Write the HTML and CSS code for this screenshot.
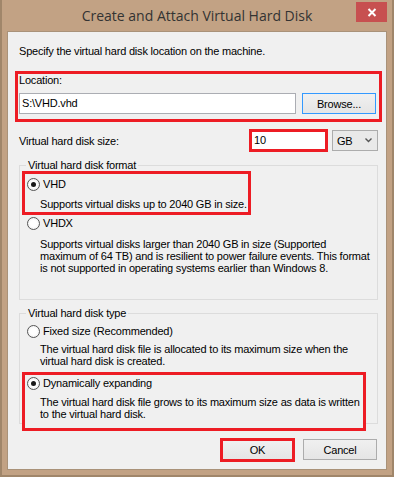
FILE: index.html
```html
<!DOCTYPE html>
<html lang="en">
  <head>
    <meta charset="UTF-8" />
    <title>Create and Attach Virtual Hard Disk</title>
    <link rel="stylesheet" href="styles.css">
  </head>
  <body>
    <div class="window">
      <div class="titlebar">
        <div class="title">Create and Attach Virtual Hard Disk</div>
        <button class="close" title="Close">
          <svg width="10" height="9" viewBox="0 0 10 9">
            <path d="M1.5 1 L8.5 8 M8.5 1 L1.5 8" stroke="#fff" stroke-width="2" fill="none" />
          </svg>
        </button>
      </div>

      <div class="client">
        <p class="intro">Specify the virtual hard disk location on the machine.</p>

        <div class="hl hl-location">
          <div class="field-label">Location:</div>
          <div class="location-row">
            <div class="textbox">S:\VHD.vhd</div>
            <button class="btn btn-default">Browse...</button>
          </div>
        </div>

        <div class="size-row">
          <span class="size-label">Virtual hard disk size:</span>
          <div class="size-input">10</div>
          <div class="combo">
            <span>GB</span>
            <svg width="7" height="5" viewBox="0 0 7 5">
              <path d="M0.5 0.5 L3.5 3.5 L6.5 0.5" stroke="#555" stroke-width="1.4" fill="none" />
            </svg>
          </div>
        </div>

        <fieldset class="group">
          <legend>Virtual hard disk format</legend>
          <div class="hl hl-vhd">
            <div class="option"><span class="radio checked"></span>VHD</div>
            <p class="desc">Supports virtual disks up to 2040 GB in size.</p>
          </div>
          <div class="option"><span class="radio"></span>VHDX</div>
          <p class="desc desc-vhdx">
            Supports virtual disks larger than 2040 GB in size (Supported<br>
            maximum of 64 TB) and is resilient to power failure events. This format<br>
            is not supported in operating systems earlier than Windows 8.
          </p>
        </fieldset>

        <fieldset class="group group-type">
          <legend>Virtual hard disk type</legend>
          <div class="option option-fixed"><span class="radio"></span>Fixed size (Recommended)</div>
          <p class="desc desc-fixed">
            The virtual hard disk file is allocated to its maximum size when the<br>
            virtual hard disk is created.
          </p>
          <div class="hl hl-dyn">
            <div class="option"><span class="radio checked"></span>Dynamically expanding</div>
            <p class="desc">
              The virtual hard disk file grows to its maximum size as data is written<br>
              to the virtual hard disk.
            </p>
          </div>
        </fieldset>

        <div class="buttons">
          <div class="hl hl-ok"><button class="btn btn-ok">OK</button></div>
          <button class="btn btn-cancel">Cancel</button>
        </div>
      </div>
    </div>
  </body>
</html>
```

FILE: styles.css
```css
* {
  box-sizing: border-box;
}
body {
  margin: 0;
  background: #c2a284;
  font-family: "Liberation Sans", Arial, sans-serif;
  font-size: 11px;
  letter-spacing: -0.2px;
  color: #000;
}
.window {
  width: 394px;
  height: 477px;
  background: #c2a284;
  border: 2px solid #a0866a;
  border-top: 0;
  display: flex;
  flex-direction: column;
}
.titlebar {
  height: 31px;
  display: flex;
  align-items: flex-start;
  padding: 0 5px;
}
.title {
  flex: 1;
  margin-left: 31px;
  margin-top: 6px;
  text-align: center;
  font-family: "Open Sans", sans-serif;
  font-size: 14px;
  letter-spacing: 0;
  line-height: 20px;
  color: #333;
}
.close {
  width: 31px;
  height: 20px;
  margin-top: 2px;
  padding: 0;
  border: none;
  background: #c75050;
  display: flex;
  align-items: center;
  justify-content: center;
}
.client {
  flex: 1;
  min-height: 0;
  margin: 0 5px 5px 5px;
  border: 1px solid #a99279;
  background: #f0f0f0;
  padding: 13px 4px 0 7px;
}
.intro {
  margin: 0 0 0 4px;
  line-height: 13px;
}
.hl {
  border: 3px solid #ed1c24;
}
.hl-location {
  margin-top: 13px;
  padding: 0 2px 5px 1px;
}
.field-label {
  line-height: 13px;
}
.location-row {
  display: flex;
  gap: 6px;
  margin-top: 6px;
}
.textbox {
  width: 277px;
  height: 21px;
  border: 1px solid #abadb3;
  background: #fff;
  padding-left: 2px;
  line-height: 19px;
}
.btn {
  font-family: inherit;
  font-size: 11px;
  letter-spacing: -0.2px;
  color: #000;
  background: linear-gradient(#f0f0f0, #e5e5e5);
  border: 1px solid #acacac;
  padding: 0;
}
.btn-default {
  width: 74px;
  height: 21px;
  border-color: #3399ff;
}
.size-row {
  display: flex;
  align-items: center;
  height: 23px;
  margin-top: 7px;
}
.size-label {
  flex: 1;
  margin-left: 4px;
}
.size-input {
  width: 79px;
  height: 23px;
  border: 3px solid #ed1c24;
  background: #fff;
  padding-left: 2px;
  line-height: 17px;
}
.combo {
  width: 46px;
  height: 21px;
  margin: 0 4px 0 4px;
  border: 1px solid #acacac;
  background: #e9e9e9;
  display: flex;
  align-items: center;
  padding: 0 5px 0 4px;
}
.combo svg {
  margin-left: auto;
}
.group {
  margin: 7px 4px 0 4px;
  padding: 0 0 25px 0;
  border: 1px solid #dcdcdc;
  min-width: 0;
}
.group legend {
  margin-left: 6px;
  padding: 0 2px;
  line-height: 13px;
}
.option {
  display: flex;
  align-items: center;
  height: 16px;
  padding-left: 7px;
}
.radio {
  width: 13px;
  height: 13px;
  margin-right: 3px;
  border: 1px solid #555;
  border-radius: 50%;
  background: radial-gradient(circle, #fff 40%, #e8e8e8);
  display: flex;
  align-items: center;
  justify-content: center;
}
.radio.checked::after {
  content: "";
  width: 5px;
  height: 5px;
  border-radius: 50%;
  background: #1a1a1a;
}
.desc {
  margin: 6px 0 0 0;
  padding-left: 20px;
  line-height: 12px;
  white-space: nowrap;
}
.hl-vhd {
  width: 229px;
  margin: -1px 0 0 2px;
  padding: 2px 0 2px 0;
}
.hl-vhd .option,
.hl-dyn .option {
  padding-left: 2px;
}
.hl-vhd .desc,
.hl-dyn .desc {
  padding-left: 15px;
}
.desc-vhdx {
  margin-top: 7px;
}
.group-type {
  padding-bottom: 0;
}
.option-fixed {
  margin-top: 3px;
}
.desc-fixed {
  margin-top: 4px;
}
.hl-dyn {
  width: 344px;
  margin: 5px 0 -8px 2px;
  padding: 0 0 8px 0;
  background: #f0f0f0;
}
.hl-dyn .desc {
  margin-top: 5px;
}
.buttons {
  display: flex;
  justify-content: flex-end;
  align-items: flex-start;
  gap: 8px;
  margin-top: 14px;
  padding-right: 5px;
}
.hl-ok {
  width: 75px;
  height: 24px;
}
.btn-ok {
  width: 100%;
  height: 100%;
  border: none;
}
.btn-cancel {
  width: 74px;
  height: 21px;
  margin-top: 1px;
}
```
